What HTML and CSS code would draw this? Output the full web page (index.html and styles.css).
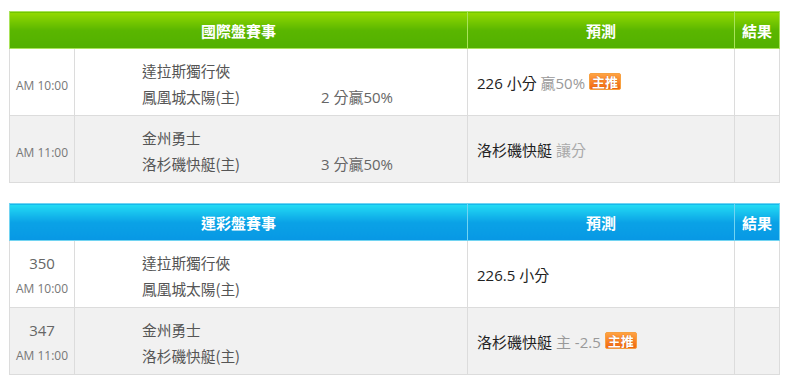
FILE: index.html
```html
<!DOCTYPE html>
<html lang="zh-Hant">
<head>
<meta charset="utf-8">
<link rel="stylesheet" href="styles.css">
</head>
<body>
<div class="page">
  <table class="board board-green">
    <colgroup><col class="c1"><col class="c2"><col class="c3"><col class="c4"></colgroup>
    <thead>
      <tr><th colspan="2">國際盤賽事</th><th>預測</th><th>結果</th></tr>
    </thead>
    <tbody>
      <tr>
        <td class="time"><div class="tm single">AM 10:00</div></td>
        <td class="match">
          <div class="teams">
            <div class="team">達拉斯獨行俠</div>
            <div class="team">鳳凰城太陽(主)</div>
          </div>
          <div class="odds">2 分贏50%</div>
        </td>
        <td class="pred">226 小分 <span class="sub">贏50%</span><span class="badge">主推</span></td>
        <td class="result"></td>
      </tr>
      <tr class="alt">
        <td class="time"><div class="tm single">AM 11:00</div></td>
        <td class="match">
          <div class="teams">
            <div class="team">金州勇士</div>
            <div class="team">洛杉磯快艇(主)</div>
          </div>
          <div class="odds">3 分贏50%</div>
        </td>
        <td class="pred">洛杉磯快艇 <span class="sub light">讓分</span></td>
        <td class="result"></td>
      </tr>
    </tbody>
  </table>

  <table class="board board-blue">
    <colgroup><col class="c1"><col class="c2"><col class="c3"><col class="c4"></colgroup>
    <thead>
      <tr><th colspan="2">運彩盤賽事</th><th>預測</th><th>結果</th></tr>
    </thead>
    <tbody>
      <tr>
        <td class="time"><div class="num">350</div><div class="tm">AM 10:00</div></td>
        <td class="match">
          <div class="teams">
            <div class="team">達拉斯獨行俠</div>
            <div class="team">鳳凰城太陽(主)</div>
          </div>
        </td>
        <td class="pred">226.5 小分</td>
        <td class="result"></td>
      </tr>
      <tr class="alt">
        <td class="time"><div class="num">347</div><div class="tm">AM 11:00</div></td>
        <td class="match">
          <div class="teams">
            <div class="team">金州勇士</div>
            <div class="team">洛杉磯快艇(主)</div>
          </div>
        </td>
        <td class="pred">洛杉磯快艇 <span class="sub">主 -2.5</span><span class="badge">主推</span></td>
        <td class="result"></td>
      </tr>
    </tbody>
  </table>
</div>
</body>
</html>
```

FILE: styles.css
```css
* { box-sizing: border-box; }
html, body { margin: 0; padding: 0; background: #fff; }
body {
  font-family: "Open Sans", "Noto Sans CJK TC", sans-serif;
  font-size: 15px;
  color: #333;
}
.page {
  padding: 11px 0 0 9px;
}
.board {
  width: 770px;
  table-layout: fixed;
  border-collapse: collapse;
  margin-bottom: 20px;
}
.c1 { width: 65px; }
.c2 { width: 393px; }
.c3 { width: 267px; }
.c4 { width: 45px; }

.board th {
  height: 37px;
  padding: 0;
  color: #fff;
  font-weight: bold;
  font-size: 15px;
  text-align: center;
  font-family: "Noto Sans CJK TC", sans-serif;
}
.board-green th {
  background: linear-gradient(#93da00 0%, #5ab600 50%, #52b000 100%);
  border: 1px solid #a9e35a;
}
.board-blue th {
  background: linear-gradient(#24dcf4 0%, #0aa2e6 50%, #0898e4 100%);
  border: 1px solid #72d4f2;
}
.board td {
  border: 1px solid #dcdcdc;
  height: 67px;
  padding: 0;
  vertical-align: middle;
  background: #fff;
}
.board tr.alt td { background: #f1f1f1; }

.time {
  text-align: center;
  color: #777;
  padding-top: 4px !important;
}
.num {
  font-size: 15px;
  line-height: 26px;
  color: #666;
}
.tm {
  font-size: 12px;
  line-height: 26px;
}
.tm.single { padding-top: 4px; }

.match {
  padding: 3px 0 0 67px !important;
}
.match .teams,
.match .odds { display: inline-block; vertical-align: bottom; }
.match .teams { width: 175px; }
.team {
  line-height: 26px;
  color: #555;
  font-family: "Noto Sans CJK TC", sans-serif;
  font-size: 14.7px;
}
.odds {
  line-height: 26px;
  color: #666;
}

.pred {
  padding-left: 9px !important;
  color: #222;
}
.sub { color: #999; }
.sub.light { color: #aaa; }
.badge {
  display: inline-block;
  vertical-align: 2px;
  margin-left: 4px;
  padding: 0 2px;
  height: 17px;
  line-height: 15px;
  font-size: 13px;
  font-weight: bold;
  color: #fff;
  font-family: "Noto Sans CJK TC", sans-serif;
  background: linear-gradient(#ffa242, #f2680f);
  border: 1px solid #f7a040;
  border-radius: 2px;
  text-shadow: 0 0 1px #b84500;
}
```
